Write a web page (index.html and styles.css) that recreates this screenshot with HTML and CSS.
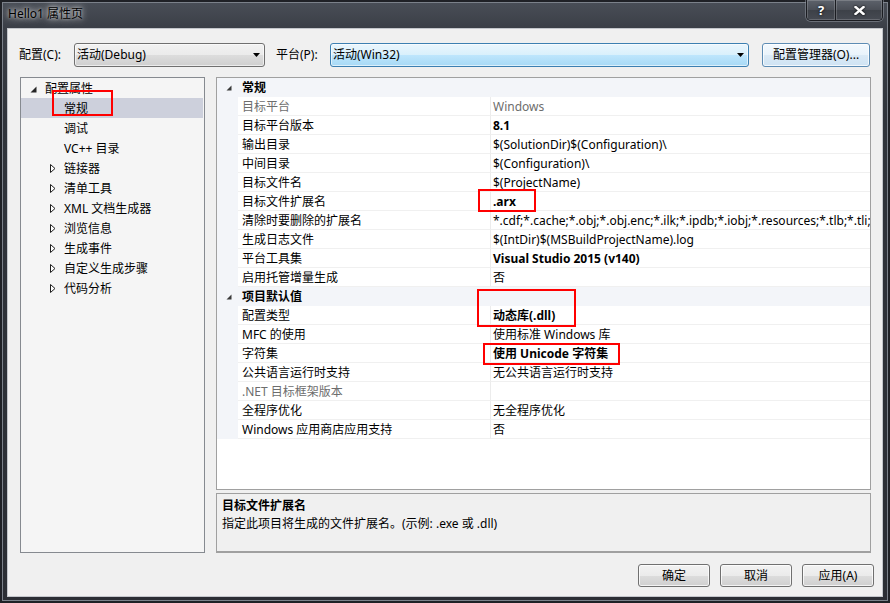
FILE: index.html
```html
<!DOCTYPE html>
<html lang="zh-CN">
<head>
<meta charset="utf-8">
<title>Hello1 属性页</title>
<link rel="stylesheet" href="styles.css">
</head>
<body>
<div class="window">
  <div class="titlebar">
    <span class="title">Hello1 属性页</span>
    <div class="caption-btns">
      <span class="cbtn help">?</span>
      <span class="cbtn close"><svg width="11" height="9" viewBox="0 0 11 9"><path d="M1.5 1 L9.5 8 M9.5 1 L1.5 8" stroke="#fff" stroke-width="2.4" stroke-linecap="square"/></svg></span>
    </div>
  </div>
  <div class="client">
    <div class="toolbar">
      <span class="lbl lbl1">配置(C):</span>
      <div class="combo c1"><span class="combo-text">活动(Debug)</span><svg class="arrow" width="7" height="4" viewBox="0 0 7 4"><path d="M0 0 H7 L3.5 4 Z" fill="#000"/></svg></div>
      <span class="lbl lbl2">平台(P):</span>
      <div class="combo c2"><span class="combo-text">活动(Win32)</span><svg class="arrow" width="7" height="4" viewBox="0 0 7 4"><path d="M0 0 H7 L3.5 4 Z" fill="#000"/></svg></div>
      <button class="btn mgr">配置管理器(O)...</button>
    </div>
    <div class="main">
      <div class="tree">
        <div class="node l0"><span class="exp"><svg width="7" height="7" viewBox="0 0 7 7"><path d="M6.5 0.5 V6.5 H0.5 Z" fill="#262626"/></svg></span><span>配置属性</span></div>
        <div class="node l1 sel"><span class="exp"></span><span>常规</span></div>
        <div class="node l1"><span class="exp"></span><span>调试</span></div>
        <div class="node l1"><span class="exp"></span><span>VC++ 目录</span></div>
        <div class="node l1"><span class="exp"><svg width="6" height="9" viewBox="0 0 6 9"><path d="M0.5 0.5 L5 4.5 L0.5 8.5 Z" fill="#fff" stroke="#1e1e1e"/></svg></span><span>链接器</span></div>
        <div class="node l1"><span class="exp"><svg width="6" height="9" viewBox="0 0 6 9"><path d="M0.5 0.5 L5 4.5 L0.5 8.5 Z" fill="#fff" stroke="#1e1e1e"/></svg></span><span>清单工具</span></div>
        <div class="node l1"><span class="exp"><svg width="6" height="9" viewBox="0 0 6 9"><path d="M0.5 0.5 L5 4.5 L0.5 8.5 Z" fill="#fff" stroke="#1e1e1e"/></svg></span><span>XML 文档生成器</span></div>
        <div class="node l1"><span class="exp"><svg width="6" height="9" viewBox="0 0 6 9"><path d="M0.5 0.5 L5 4.5 L0.5 8.5 Z" fill="#fff" stroke="#1e1e1e"/></svg></span><span>浏览信息</span></div>
        <div class="node l1"><span class="exp"><svg width="6" height="9" viewBox="0 0 6 9"><path d="M0.5 0.5 L5 4.5 L0.5 8.5 Z" fill="#fff" stroke="#1e1e1e"/></svg></span><span>生成事件</span></div>
        <div class="node l1"><span class="exp"><svg width="6" height="9" viewBox="0 0 6 9"><path d="M0.5 0.5 L5 4.5 L0.5 8.5 Z" fill="#fff" stroke="#1e1e1e"/></svg></span><span>自定义生成步骤</span></div>
        <div class="node l1"><span class="exp"><svg width="6" height="9" viewBox="0 0 6 9"><path d="M0.5 0.5 L5 4.5 L0.5 8.5 Z" fill="#fff" stroke="#1e1e1e"/></svg></span><span>代码分析</span></div>
      </div>
      <div class="right">
        <div class="grid">
          <div class="cat"><span class="cat-exp"><svg width="6" height="6" viewBox="0 0 6 6"><path d="M5.5 0.5 V5.5 H0.5 Z" fill="#3a3a3a"/></svg></span><span class="cat-name">常规</span></div>
          <div class="row dis"><span class="gut"></span><span class="name">目标平台</span><span class="val">Windows</span></div>
          <div class="row"><span class="gut"></span><span class="name">目标平台版本</span><span class="val b">8.1</span></div>
          <div class="row"><span class="gut"></span><span class="name">输出目录</span><span class="val">$(SolutionDir)$(Configuration)\</span></div>
          <div class="row"><span class="gut"></span><span class="name">中间目录</span><span class="val">$(Configuration)\</span></div>
          <div class="row"><span class="gut"></span><span class="name">目标文件名</span><span class="val">$(ProjectName)</span></div>
          <div class="row"><span class="gut"></span><span class="name">目标文件扩展名</span><span class="val b">.arx</span></div>
          <div class="row"><span class="gut"></span><span class="name">清除时要删除的扩展名</span><span class="val">*.cdf;*.cache;*.obj;*.obj.enc;*.ilk;*.ipdb;*.iobj;*.resources;*.tlb;*.tli;*.tlh;*.tmp;*.rsp;*.pgc;*.pgd;*.meta;*.tlog;*.manifest;*.res;*.pch;*.exp;*.idb</span></div>
          <div class="row"><span class="gut"></span><span class="name">生成日志文件</span><span class="val">$(IntDir)$(MSBuildProjectName).log</span></div>
          <div class="row"><span class="gut"></span><span class="name">平台工具集</span><span class="val b">Visual Studio 2015 (v140)</span></div>
          <div class="row"><span class="gut"></span><span class="name">启用托管增量生成</span><span class="val">否</span></div>
          <div class="cat"><span class="cat-exp"><svg width="6" height="6" viewBox="0 0 6 6"><path d="M5.5 0.5 V5.5 H0.5 Z" fill="#3a3a3a"/></svg></span><span class="cat-name">项目默认值</span></div>
          <div class="row"><span class="gut"></span><span class="name">配置类型</span><span class="val b">动态库(.dll)</span></div>
          <div class="row"><span class="gut"></span><span class="name">MFC 的使用</span><span class="val">使用标准 Windows 库</span></div>
          <div class="row"><span class="gut"></span><span class="name">字符集</span><span class="val b">使用 Unicode 字符集</span></div>
          <div class="row"><span class="gut"></span><span class="name">公共语言运行时支持</span><span class="val">无公共语言运行时支持</span></div>
          <div class="row dis"><span class="gut"></span><span class="name">.NET 目标框架版本</span><span class="val"></span></div>
          <div class="row"><span class="gut"></span><span class="name">全程序优化</span><span class="val">无全程序优化</span></div>
          <div class="row"><span class="gut"></span><span class="name">Windows 应用商店应用支持</span><span class="val">否</span></div>
        </div>
        <div class="desc">
          <div class="desc-title">目标文件扩展名</div>
          <div class="desc-text">指定此项目将生成的文件扩展名。(示例: .exe 或 .dll)</div>
        </div>
      </div>
    </div>
    <div class="footer">
      <button class="btn">确定</button>
      <button class="btn">取消</button>
      <button class="btn">应用(A)</button>
    </div>
  </div>
  <div class="mark m1"></div>
  <div class="mark m2"></div>
  <div class="mark m3"></div>
  <div class="mark m4"></div>
</div>
</body>
</html>
```
FILE: styles.css
```css
html, body {
  margin: 0;
  padding: 0;
  width: 890px;
  height: 603px;
  overflow: hidden;
  background: #23262c;
}
body {
  font-family: "Noto Sans", "Noto Sans CJK SC", sans-serif;
  font-size: 12px;
  color: #000;
}
.window {
  position: relative;
  width: 890px;
  height: 603px;
  box-sizing: border-box;
  padding: 0 7px 6px 7px;
  display: flex;
  flex-direction: column;
  background: linear-gradient(180deg, #4a4f58 0px, #3b3f47 28px, #30343b 120px, #2b2e34 100%);
  box-shadow: inset 0 0 0 2px #1f2126, inset 0 0 0 3px #7b818a;
}
.titlebar {
  height: 28px;
  display: flex;
  align-items: flex-start;
  flex: none;
}
.title {
  margin-left: 1px;
  margin-top: 6px;
  line-height: 16px;
  font-size: 12px;
  color: #000;
  text-shadow: 0 0 6px rgba(255,255,255,0.75), 0 0 10px rgba(255,255,255,0.55), 0 0 3px rgba(255,255,255,0.5);
}
.caption-btns {
  margin-left: auto;
  display: flex;
  height: 20px;
  border: 1px solid #1a1c21;
  border-top: none;
  border-radius: 0 0 5px 5px;
  overflow: hidden;
  box-shadow: 0 0 0 1px rgba(150,156,165,0.5);
}
.cbtn {
  display: flex;
  align-items: center;
  justify-content: center;
  height: 20px;
  background: linear-gradient(180deg, #5d626b 0%, #4a4e56 50%, #3d4148 51%, #464a52 100%);
  box-shadow: inset 0 0 0 1px rgba(255,255,255,0.18);
  color: #fff;
}
.help {
  width: 28px;
  font-weight: bold;
  font-size: 13px;
  line-height: 20px;
  border-right: 1px solid #1a1c21;
  text-shadow: 0 0 3px #000;
}
.close {
  width: 46px;
}
.close svg { filter: drop-shadow(0 0 1px #000); }
.client {
  flex: 1;
  display: flex;
  flex-direction: column;
  background: #f0f0f0;
  border: 1px solid #c3c6cb;
}
.toolbar {
  display: flex;
  align-items: center;
  height: 24px;
  margin-top: 14px;
  padding-left: 11px;
}
.lbl {
  line-height: 24px;
}
.lbl1 { width: 55px; }
.lbl2 { width: 54px; margin-left: 11px; }
.combo {
  height: 24px;
  box-sizing: border-box;
  border: 1px solid #707070;
  border-radius: 3px;
  display: flex;
  align-items: center;
  padding-left: 2px;
  background: linear-gradient(180deg, #f2f2f2 0%, #ebebeb 50%, #dddddd 50%, #cfcfcf 100%);
  box-shadow: inset 0 0 0 1px rgba(255,255,255,0.6);
}
.combo-text { line-height: 20px; }
.combo .arrow { margin-left: auto; margin-right: 4px; }
.c1 { width: 191px; }
.c2 {
  width: 419px;
  border-color: #3c7fb1;
  background: linear-gradient(180deg, #eaf6fd 0%, #d9f0fc 50%, #bee6fd 50%, #a7d9f5 100%);
}
.btn {
  font-family: inherit;
  font-size: 12px;
  color: #000;
  height: 23px;
  box-sizing: border-box;
  border: 1px solid #707070;
  border-radius: 3px;
  padding: 0;
  background: linear-gradient(180deg, #f2f2f2 0%, #ebebeb 50%, #dddddd 50%, #cfcfcf 100%);
  box-shadow: inset 0 0 0 1px rgba(255,255,255,0.75);
  line-height: 20px;
}
.mgr {
  width: 108px;
  height: 24px;
  margin-left: 13px;
  border-color: #5d8cb4;
  background: linear-gradient(180deg, #f4f9fd 0%, #e9f3fb 50%, #dbeaf6 50%, #cfe3f3 100%);
}
.main {
  display: flex;
  margin-top: 10px;
  padding-left: 12px;
  height: 476px;
}
.tree {
  width: 185px;
  height: 476px;
  box-sizing: border-box;
  border: 1px solid #868a90;
  background: #f5f5f5;
}
.node {
  display: flex;
  align-items: center;
  height: 20px;
  line-height: 20px;
  white-space: nowrap;
}
.node > span:last-child { padding-top: 1px; line-height: 19px; }
.node.l0 { padding-left: 8px; }
.node.l1 { padding-left: 27px; }
.node.sel { background: #cdd0dc; margin-right: 1px; }
.exp {
  width: 16px;
  height: 20px;
  display: flex;
  align-items: center;
  flex: none;
}
.l0 .exp svg { margin-left: 1px; margin-top: 2px; }
.l1 .exp svg { margin-left: 2px; }
.right {
  width: 655px;
  margin-left: 11px;
  display: flex;
  flex-direction: column;
}
.grid {
  height: 413px;
  box-sizing: border-box;
  border: 1px solid #a0a0a0;
  background: #fff;
  overflow: hidden;
}
.cat {
  display: flex;
  align-items: center;
  height: 19px;
  background: #f3f5f9;
}
.cat-exp {
  width: 25px;
  display: flex;
  justify-content: flex-end;
  box-sizing: border-box;
}
.cat-exp svg { margin-right: 10px; margin-top: 1px; }
.cat-name {
  font-weight: bold;
  line-height: 18px;
  padding-top: 1px;
}
.row {
  display: flex;
  height: 19px;
  white-space: nowrap;
}
.gut {
  width: 21px;
  flex: none;
  background: #f3f5f9;
}
.name, .val {
  height: 19px;
  box-sizing: border-box;
  padding-top: 1px;
  line-height: 17px;
  border-bottom: 1px solid #f0f0f0;
  overflow: hidden;
}
.name {
  width: 253px;
  flex: none;
  padding-left: 4px;
  border-right: 1px solid #ececec;
}
.val {
  flex: 1;
  padding-left: 2px;
  min-width: 0;
}
.val.b { font-weight: bold; }
.row.dis .name, .row.dis .val { color: #6d6d6d; }
.desc {
  margin-top: 3px;
  height: 60px;
  box-sizing: border-box;
  border: 1px solid #a0a0a0;
  border-bottom-width: 2px;
  background: #f0f0f0;
  padding: 3px 0 0 5px;
}
.desc-title {
  font-weight: bold;
  line-height: 18px;
}
.desc-text {
  line-height: 18px;
}
.footer {
  display: flex;
  justify-content: flex-end;
  gap: 10px;
  margin-top: 11px;
  padding-right: 8px;
}
.footer .btn { width: 72px; }
.mark {
  position: absolute;
  box-sizing: border-box;
  border: 2px solid #f00;
}
.m1 { left: 52px; top: 90px; width: 61px; height: 26px; }
.m2 { left: 478px; top: 189px; width: 58px; height: 23px; }
.m3 { left: 477px; top: 289px; width: 99px; height: 38px; }
.m4 { left: 483px; top: 343px; width: 137px; height: 22px; }
```
